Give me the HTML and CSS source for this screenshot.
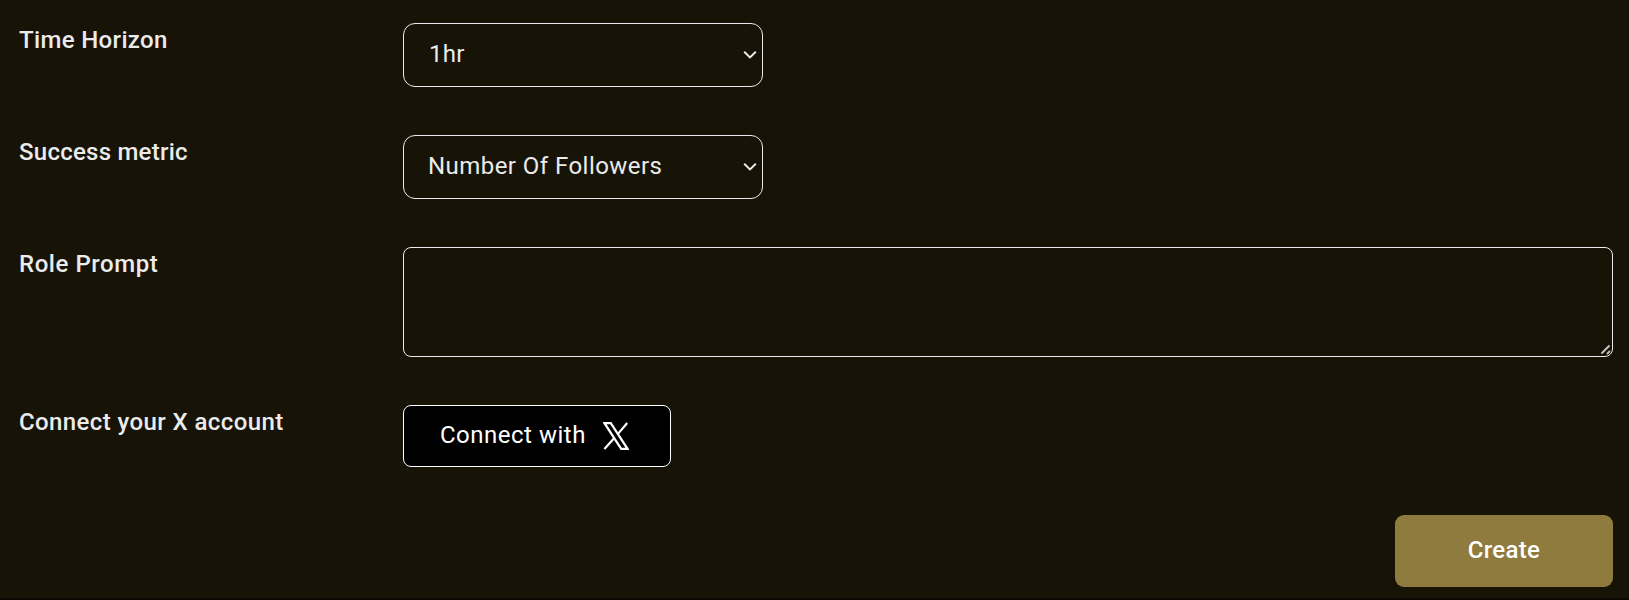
FILE: index.html
```html
<!DOCTYPE html>
<html lang="en">
<head>
<meta charset="utf-8">
<title>Create agent</title>
<link rel="stylesheet" href="styles.css">
</head>
<body>
<form class="form">
  <div class="row">
    <label class="label label-time" for="horizon">Time Horizon</label>
    <div class="select-wrap">
      <select class="select select-horizon" id="horizon"><option>1hr</option></select>
      <svg class="chevron" viewBox="0 0 14 10"><path d="M1.2 1.8 7 7.4 12.8 1.8"/></svg>
    </div>
  </div>
  <div class="row">
    <label class="label label-metric" for="metric">Success metric</label>
    <div class="select-wrap">
      <select class="select select-metric" id="metric"><option>Number Of Followers</option></select>
      <svg class="chevron" viewBox="0 0 14 10"><path d="M1.2 1.8 7 7.4 12.8 1.8"/></svg>
    </div>
  </div>
  <div class="row">
    <label class="label label-role" for="prompt">Role Prompt</label>
    <div class="prompt-wrap">
      <textarea class="prompt" id="prompt"></textarea>
      <svg class="grip" viewBox="0 0 12 12"><path d="M1.5 9.5 9.5 1.5M7 10 10 7"/></svg>
    </div>
  </div>
  <div class="row">
    <span class="label label-account">Connect your X account</span>
    <button class="connect" type="button">
      <span class="connect-text">Connect with</span>
      <svg class="x-logo" viewBox="0 0 26 28"><path d="M1.5 1.2H7.8L24.5 26.8H18.2ZM24.2 1 15.2 11.6M10.6 16.8 1.4 27"/></svg>
    </button>
  </div>
  <button class="create" type="button">Create</button>
</form>
</body>
</html>
```
FILE: styles.css
```css
* { box-sizing: border-box; }
body {
  margin: 0;
  height: 600px;
  overflow: hidden;
  border-bottom: 2px solid #0e0802;
  background: #171307;
  color: #ebebeb;
  font: 400 24px/32px "Roboto", sans-serif;
}
.form {
  display: flex;
  flex-direction: column;
  gap: 48px;
  padding: 23px 16px 0 19px;
}
.row {
  display: grid;
  grid-template-columns: 384px 1fr;
  align-items: start;
}
.label { padding-top: 1px; font-weight: 500; white-space: nowrap; }
.label-time { letter-spacing: 0.35px; }
.label-metric { letter-spacing: 0.25px; }
.label-role { letter-spacing: 0.55px; }
.label-account { letter-spacing: 0.4px; }
.select-wrap { position: relative; width: 360px; height: 64px; }
.select {
  appearance: none;
  display: block;
  width: 100%;
  height: 100%;
  padding: 0 24px 3px 25px;
  border: 1px solid #ebebeb;
  border-radius: 12px;
  background: transparent;
  color: inherit;
  font: inherit;
}
.select-horizon { letter-spacing: 0.3px; }
.select-metric { padding-left: 24px; letter-spacing: 0.45px; }
.chevron {
  position: absolute;
  right: 6px;
  top: 27px;
  width: 14px;
  height: 10px;
  fill: none;
  stroke: #ebebeb;
  stroke-width: 2;
}
.prompt-wrap { position: relative; height: 110px; }
.prompt {
  display: block;
  width: 100%;
  height: 100%;
  padding: 12px 24px;
  resize: none;
  border: 1px solid #ebebeb;
  border-radius: 8px;
  background: transparent;
  color: inherit;
  font: inherit;
}
.grip {
  position: absolute;
  right: 1px;
  bottom: 1px;
  width: 12px;
  height: 12px;
  fill: none;
  stroke: #c8c6c0;
  stroke-width: 1.8;
}
.connect {
  display: flex;
  align-items: center;
  justify-content: space-between;
  width: 268px;
  height: 62px;
  padding: 0 41px 0 36px;
  border: 1px solid #fff;
  border-radius: 8px;
  background: #000;
  color: #fff;
  font: inherit;
}
.connect-text { padding-bottom: 2px; letter-spacing: 0.5px; white-space: nowrap; }
.x-logo {
  width: 26px;
  height: 28px;
  fill: none;
  stroke: #fff;
  stroke-width: 2.2;
}
.create {
  align-self: flex-end;
  width: 218px;
  height: 72px;
  padding: 0 0 2px;
  border: 0;
  border-radius: 9px;
  background: #8f7b3d;
  color: #fff;
  font: inherit;
  font-weight: 500;
  letter-spacing: 0.3px;
}
```
